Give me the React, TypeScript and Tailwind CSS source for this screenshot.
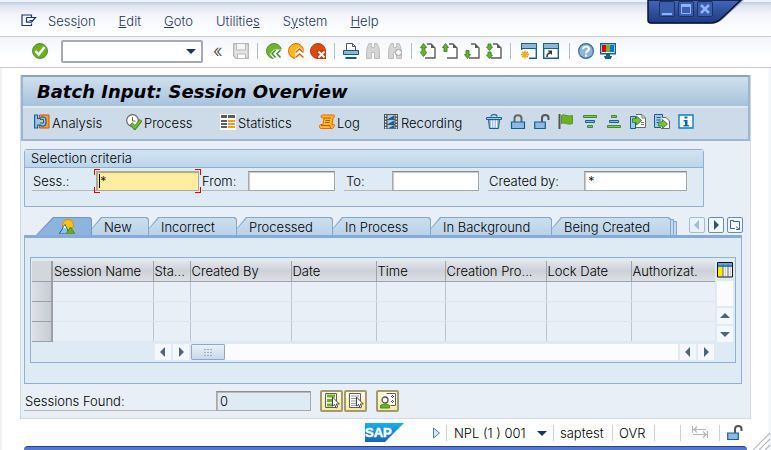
import React from 'react';
import type { ReactNode } from 'react';

function Icon({ children, size = 16 }: { children: ReactNode; size?: number }) {
  return (
    <svg width={size} height={size} viewBox="0 0 16 16" fill="none" className="block shrink-0" aria-hidden="true">
      {children}
    </svg>
  );
}

/* ---------- standard toolbar icons ---------- */
const OkIcon = () => (
  <Icon>
    <circle cx="8" cy="8" r="7.5" fill="#6fb01e" stroke="#4d8f35" />
    <path d="M3.5 8l3.2 3.6L12.5 4" stroke="#fff" strokeWidth="2.4" />
  </Icon>
);
const SaveIcon = () => (
  <Icon>
    <path d="M.7.7h14.6v14.6H3L.7 13z" fill="#e4e4e4" stroke="#b8b8b8" strokeWidth="1.4" />
    <path d="M3.5 1v6h9V1" fill="#f6f6f6" stroke="#b8b8b8" />
    <path d="M4.5 15v-4h8v4" fill="#fff" stroke="#b8b8b8" />
  </Icon>
);
const BackIcon = () => (
  <Icon>
    <circle cx="8" cy="8" r="7.5" fill="#72b32a" stroke="#4a9138" />
    <path d="M16 6.5H8L4 11l4 5h8z" fill="#fff" />
    <path d="M9.5 7L6 10.8l3.5 3.8M14.5 7L11 10.8l3.5 3.8" stroke="#3d8c3a" strokeWidth="1.5" />
  </Icon>
);
const ExitIcon = () => (
  <Icon>
    <circle cx="8" cy="8" r="7.5" fill="#fdb813" stroke="#e3640f" />
    <path d="M7 16V8l4-4 5 4v8z" fill="#fff" />
    <path d="M7.5 9.5L11.5 6l4 3.5M7.5 14.5l4-3.5 4 3.5" stroke="#e05a10" strokeWidth="1.5" />
  </Icon>
);
const CancelIcon = () => (
  <Icon>
    <circle cx="8" cy="8" r="7.5" fill="#d84b12" stroke="#b83a10" />
    <path d="M7 7h9v9H7z" fill="#c43c10" />
    <path d="M8.5 8.5l6 6M14.5 8.5l-6 6" stroke="#fff" strokeWidth="2" />
  </Icon>
);
const PrintIcon = () => (
  <Icon>
    <path d="M3.5 7V.5h6l3 3V7" fill="#fff" stroke="#555" />
    <path d="M9.5.5v3h3" stroke="#555" />
    <path d="M.5 7.5h15v4H.5z" fill="#8fb4da" stroke="#0b5c8f" />
    <path d="M2.5 15h11" stroke="#0b5c8f" strokeWidth="2" />
  </Icon>
);
const FindIcon = () => (
  <Icon>
    <path d="M2.5 3.5L4 .5h2.5v4h3v-4H12l1.5 3 1 5v7h-5v-6h-3v6h-5v-7z" fill="#d6d6d6" stroke="#bcbcbc" />
  </Icon>
);
const FindNextIcon = () => (
  <Icon>
    <path d="M2.5 3.5L4 .5h2.5v4h3v-4H12l1.5 3 1 5v7h-5v-6h-3v6h-5v-7z" fill="#d6d6d6" stroke="#bcbcbc" />
    <path d="M11.5 6v7M8 9.5h7" stroke="#b4b4b4" strokeWidth="4.5" />
    <path d="M11.5 7v5M9 9.5h5" stroke="#fff" strokeWidth="2" />
  </Icon>
);
const Page = () => (
  <>
    <path d="M5.5 1H11l4 4v10H5z" fill="#fff" />
    <path d="M7 1h4l4 4v10H5" stroke="#5c5c5c" strokeWidth="1.4" />
    <path d="M11 1v4h4z" fill="#5c5c5c" />
  </>
);
const FirstPageIcon = () => (
  <Icon>
    <Page />
    <path d="M3.5.5L.5 4.5H2v3L.5 9.5l3 4 3-4L5 7.5v-3h1.5z" fill="#6fb01e" stroke="#3d8c3a" />
  </Icon>
);
const PrevPageIcon = () => (
  <Icon>
    <Page />
    <path d="M3.5.5l-3 4H2v4h3v-4h1.5z" fill="#6fb01e" stroke="#3d8c3a" />
  </Icon>
);
const NextPageIcon = () => (
  <Icon>
    <Page />
    <path d="M3.5 15.5l-3-4H2v-4h3v4h1.5z" fill="#6fb01e" stroke="#3d8c3a" />
  </Icon>
);
const LastPageIcon = () => (
  <Icon>
    <Page />
    <path d="M3.5 7.5L.5 4H2V1h3v3h1.5zM3.5 15.5L.5 12H2V9h3v3h1.5z" fill="#6fb01e" stroke="#3d8c3a" />
  </Icon>
);
const NewModeIcon = () => (
  <Icon>
    <path d="M.7.7h14.6v14.6H.7z" fill="#fff" stroke="#12628f" strokeWidth="1.4" />
    <path d="M1 1h14v4H1z" fill="#8fb4d6" />
    <path d="M1 5.5h14" stroke="#12628f" />
    <path d="M0 7h8v9H0z" fill="#fff" />
    <path d="M4 7.5v8M0 11.5h8M1.2 8.7l5.6 5.6M6.8 8.7l-5.6 5.6" stroke="#ef8a10" strokeWidth="1.3" />
    <circle cx="4" cy="11.5" r="2.6" fill="#fdb312" />
  </Icon>
);
const ShortcutIcon = () => (
  <Icon>
    <path d="M.7.7h14.6v14.6H.7z" fill="#fff" stroke="#12628f" strokeWidth="1.4" />
    <path d="M1 1h14v4H1z" fill="#8fb4d6" />
    <path d="M1 5.5h14" stroke="#12628f" />
    <path d="M4 14c0-3 1-4 3.5-4" stroke="#333" strokeWidth="1.6" />
    <path d="M4.5 7.5H9V12z" fill="#333" />
  </Icon>
);
const HelpIcon = () => (
  <Icon>
    <circle cx="8" cy="8" r="7.4" fill="#8fb4d6" stroke="#2e6f9f" strokeWidth="1.2" />
    <path d="M5 6.2C5 2.8 11 2.8 11 6c0 2-3 2-3 4.2" stroke="#fff" strokeWidth="2" />
    <path d="M7 11.5h2v2H7z" fill="#fff" />
  </Icon>
);
const MonitorIcon = () => (
  <Icon>
    <path d="M.7.7h14.6v10.1H.7z" fill="#fff" stroke="#12628f" strokeWidth="1.4" />
    <path d="M2 2h4v7H2z" fill="#d00" />
    <path d="M6 2h4v7H6z" fill="#79b51c" />
    <path d="M10 2h4v7h-4z" fill="#0a78c8" />
    <path d="M6 11h4v2h2v1.5h-1V16H5v-1.5H4V13h2z" fill="#12628f" />
  </Icon>
);

/* ---------- application toolbar icons ---------- */
const AnalysisIcon = () => (
  <Icon>
    <path d="M5.5 1H15v13H5.5z" fill="#f9a51a" stroke="#d9480f" />
    <path d="M.6 1h3v3.5h2.5C7.5 2 12 2.5 12 6v2.5c0 4-4 4.5-6 2.5H3.600v3h-3z" fill="#9cc3e6" stroke="#0f64a0" strokeWidth="1.2" />
    <path d="M6 5.5h3.5V9H6" fill="#fbc45a" stroke="#0f64a0" />
  </Icon>
);
const ProcessIcon = () => (
  <Icon>
    <circle cx="6.5" cy="6.5" r="5.8" fill="#fff" stroke="#666" strokeWidth="1.2" />
    <path d="M6.5 3v4h3" stroke="#666" />
    <path d="M5 9.5L8.8 14 15 6" stroke="#3c8c28" strokeWidth="3.6" />
    <path d="M5.5 9.8l3.3 3.7 5.8-7" stroke="#7cc02c" strokeWidth="1.8" />
  </Icon>
);
const StatisticsIcon = () => (
  <Icon>
    <path d="M0 0h16v16H0z" fill="#fff" />
    <path d="M1 1h6v3H1zM8 1h7v3H8zM1 6h6v2H1zM1 9h6v2H1zM1 12h6v2H1z" fill="#5d5d5d" />
    <path d="M8 6h7v2H8zM8 9h7v2H8zM8 12h7v2H8z" fill="#f59a1a" />
  </Icon>
);
const LogIcon = () => (
  <Icon>
    <path d="M3.5 1h11c1.3 0 1.3 3-.5 3l-1 6.5h2c1 0 0 4-2 4H2c-2 0-2-4 0-4h2L5 4H3.5c-2 0-2-3 0-3z" fill="#fdbb1c" stroke="#e0680f" />
    <path d="M5 4h7M6.5 6.5H11M6 8.5h4.5M2 11.5h9c0 2 1 2.5 1 2.5" stroke="#cf4f10" />
  </Icon>
);
const RecordingIcon = () => (
  <Icon>
    <path d="M1 0h14v15H1z" fill="#4e5459" />
    <path d="M4.5 1h7v4h-7zM4.5 6h7v4h-7zM4.5 11h7v3.5h-7z" fill="#a9cbe9" />
    <path d="M5 5l6-3.5V5zM5 10l6-3.5V10zM5 14.5l6-3.5v3.5z" fill="#0f5f9c" />
    <path d="M2.7 1v14M13.3 1v14" stroke="#fff" strokeWidth="1.2" strokeDasharray="1.5 1.5" />
  </Icon>
);
const TrashIcon = () => (
  <Icon>
    <path d="M5 2.5C5 0 11 0 11 2.500" stroke="#12628f" strokeWidth="1.2" />
    <path d="M.5 3.5h15v2H.5z" fill="#a9c8e5" stroke="#12628f" />
    <path d="M2.5 5.5h11l-1 9h-9z" fill="#8fb4da" stroke="#12628f" />
    <path d="M5.5 6.5v7M8 6.5v7M10.5 6.5v7" stroke="#fff" strokeWidth="1.3" />
  </Icon>
);
const LockIcon = () => (
  <Icon>
    <path d="M4.5 8V4.5c0-4.5 7-4.5 7 0V8" stroke="#666" strokeWidth="2" />
    <path d="M1.5 8h13v6.5h-13z" fill="#8fb9e3" stroke="#12628f" strokeWidth="1.2" />
  </Icon>
);
const UnlockIcon = () => (
  <Icon>
    <path d="M8 8V4c0-4 6.500-4 6.500 0v2" stroke="#555" strokeWidth="2" />
    <path d="M.7 8h10.600v6.500H.7z" fill="#8fb9e3" stroke="#12628f" strokeWidth="1.2" />
  </Icon>
);
const FlagIcon = () => (
  <Icon>
    <path d="M1.5 0v15" stroke="#555" strokeWidth="2" />
    <path d="M3.5 1.5c3-2 5 1.5 11 0v8c-5 2-7-1.5-11 0z" fill="#6fb01e" stroke="#4d9a2e" />
  </Icon>
);
const Bars = ({ flip }: { flip?: boolean }) => (
  <Icon>
    <g transform={flip ? 'matrix(1 0 0 -1 0 15)' : undefined}>
      <path d="M1.5 1.5h13v2h-13z" fill="#8cc63e" stroke="#3d8c3a" />
      <path d="M3.5 6.5h9v2h-9z" fill="#8fb9e3" stroke="#12628f" />
      <path d="M5.5 11.5h5v2h-5z" fill="#8cc63e" stroke="#3d8c3a" />
    </g>
  </Icon>
);
const ImportIcon = () => (
  <Icon>
    <path d="M.5 2.5h5v12h-5z" fill="#a9c8e5" stroke="#12628f" />
    <path d="M6 .5h6L15.5 4v9.5H6" fill="#fff" stroke="#666" />
    <path d="M12 .5V4h3.5M11 8.5h3M11 10.5h3" stroke="#777" />
    <path d="M2.5 4.5h4V2l5 4.500-5 4.500V8.500h-4z" fill="#7fbe33" stroke="#3d8c3a" />
  </Icon>
);
const ExportIcon = () => (
  <Icon>
    <path d="M.5.5h8v13h-8z" fill="#a9c8e5" stroke="#12628f" />
    <path d="M2.5 3.5h4M2.5 6h4M2.5 8.5h3" stroke="#12628f" />
    <path d="M8 3.5h4L15.5 7v7.5H7" fill="#fff" stroke="#666" />
    <path d="M4.5 8h4V5.500l5 4.500-5 4.500V12h-4z" fill="#7fbe33" stroke="#3d8c3a" />
  </Icon>
);
const InfoIcon = () => (
  <Icon>
    <path d="M1 1h14v13H1z" fill="#fff" stroke="#0a80c0" strokeWidth="1.4" />
    <path d="M6.5 2.5h3v2h-3zM5.500 6h4v5H11v1.500H5.500V11H7V7.500H5.500z" fill="#0a6cae" />
  </Icon>
);

/* ---------- other drawings ---------- */
const OverviewIcon = () => (
  <Icon>
    <circle cx="9" cy="7" r="5.5" fill="#fdc312" stroke="#ef8210" />
    <path d="M0 16L6 6.5 10.5 16z" fill="#8fc0e0" stroke="#12628f" />
    <path d="M6 7l-2 3.5 2-.5 1.5 1.5z" fill="#fff" />
    <path d="M7 16l4.5-7L16 16z" fill="#6fb01e" stroke="#3d8c3a" />
  </Icon>
);
const LayoutIcon = () => (
  <svg width="16" height="16" viewBox="0 0 16 16" className="block" aria-hidden="true">
    <path d="M.5.5h15V15H.5z" fill="#f3f3f3" />
    <path d="M1 1h14v4H1z" fill="#2d7fd0" />
    <path d="M1 2h14" stroke="#9ccbf0" />
    <path d="M1 5h5v9.5H1z" fill="#ffe900" />
    <path d="M6 2v12.5M11 2v12.5" stroke="#666" />
    <path d="M8.5 5v9.5M13.5 5v9.5" stroke="#ccc" />
    <path d="M.5.5h15V15H.5z" fill="none" stroke="#111" />
  </svg>
);
const MenuIcon = () => (
  <svg width="16" height="14" viewBox="0 0 16 14" fill="none" stroke="#1d3461" strokeWidth="1.2" className="block" aria-hidden="true">
    <path d="M10.5 3V1H1v10.5h9.5v-2" />
    <path d="M5.5 3.5h9l-2.5 3H8.500M5.500 3.500v4.700h5l2-2" />
  </svg>
);
const SelectAllIcon = () => (
  <Icon>
    <path d="M1.5.5h11v14h-11z" fill="#fff" stroke="#5c5c5c" />
    <path d="M3 3h8M3 7.5h7M3 12h6" stroke="#6fb01e" strokeWidth="3" />
    <path d="M8.5 4v9l2.200-1.500 1.500 3.500 1.500-1-1.400-3h3z" fill="#fff" stroke="#444" />
  </Icon>
);
const DeselectIcon = () => (
  <Icon>
    <path d="M1.5.5h11v14h-11z" fill="#fff" stroke="#5c5c5c" />
    <path d="M3 3h8M3 5.5h7M3 8h5M3 10.5h5M3 12.5h5" stroke="#999" />
    <path d="M8.5 4v9l2.200-1.500 1.500 3.500 1.500-1-1.400-3h3z" fill="#fff" stroke="#444" />
  </Icon>
);
const UserIcon = () => (
  <Icon>
    <path d="M6.5.5h9v12h-5" fill="#fff" stroke="#5c5c5c" />
    <path d="M11 3.5h3M12.5 2v3M11 8.5h3M12.5 7v3" stroke="#444" strokeDasharray="1 1" />
    <circle cx="5" cy="7" r="3" fill="#fff" stroke="#555" strokeWidth="1.3" />
    <path d="M.5 15v-2.500l3-1.500h3l3 1.500V15z" fill="#6fb01e" stroke="#3d8c3a" />
  </Icon>
);
const Arrow = ({ dir, color = '#4c6478' }: { dir: 'l' | 'r' | 'u' | 'd'; color?: string }) => {
  const paths = { l: 'M7 0v10L2 5z', r: 'M3 0v10l5-5z', u: 'M0 7h10L5 2z', d: 'M0 3h10L5 8z' };
  return (
    <svg width="10" height="10" viewBox="0 0 10 10" className="block" aria-hidden="true">
      <path d={paths[dir]} fill={color} />
    </svg>
  );
};

/* ---------- building blocks ---------- */
const Sep = () => <span className="mx-[2px] h-4 w-px bg-[#a9bdd6]" />;

function ToolButton({ label, children }: { label: string; children: ReactNode }) {
  return (
    <button type="button" aria-label={label} className="shrink-0">
      {children}
    </button>
  );
}

function TextButton({ label, width, children }: { label: string; width: string; children: ReactNode }) {
  return (
    <button type="button" className={`flex shrink-0 items-center gap-[2px] text-left whitespace-nowrap ${width}`}>
      {children}
      <span className="pt-[2px]">{label}</span>
    </button>
  );
}

function ScrollButton({ dir, label }: { dir: 'l' | 'r' | 'u' | 'd'; label: string }) {
  return (
    <button type="button" aria-label={label} className="flex size-4 shrink-0 items-center justify-center bg-[#f4f8fc]">
      <Arrow dir={dir} />
    </button>
  );
}

function Field({ id, label, labelWidth, width, value = '', className = '' }: { id: string; label: string; labelWidth: string; width: string; value?: string; className?: string }) {
  return (
    <div className={`flex shrink-0 ${className}`}>
      <label htmlFor={id} className={`h-5 border-b border-[#b4b8bc] leading-5 whitespace-nowrap ${labelWidth}`}>{label}</label>
      <input id={id} defaultValue={value} className={`h-5 border border-[#a8a8a8] border-t-[#8c8c8c] bg-white px-[3px] shadow-[inset_1px_1px_1px_#c8c8c8] outline-none ${width}`} />
    </div>
  );
}

const tabs = [
  { label: 'New', width: 'w-[57px]' },
  { label: 'Incorrect', width: 'w-[88px]' },
  { label: 'Processed', width: 'w-[96px]' },
  { label: 'In Process', width: 'w-[98px]' },
  { label: 'In Background', width: 'w-[121px]' },
  { label: 'Being Created', width: 'w-[119px]' },
];

const columns = [
  { label: 'Session Name', width: 'w-[101px]' },
  { label: 'Sta...', width: 'w-[37px]' },
  { label: 'Created By', width: 'w-[101px]' },
  { label: 'Date', width: 'w-[85px]' },
  { label: 'Time', width: 'w-[69px]' },
  { label: 'Creation Pro...', width: 'w-[101px]' },
  { label: 'Lock Date', width: 'w-[85px]' },
  { label: 'Authorizat.', width: '' },
];

function Menu() {
  const item = 'shrink-0';
  return (
    <nav className="flex h-[37px] items-center gap-[23px] border-b border-[#c5cad6] bg-[linear-gradient(#eef2fb_0,#eef2fb_2px,#bfcde6_2px,#dfe4f1_6px,#f2f4f9_14px,#fbfcfd_26px,#fff)] pt-[6px] pl-[21px] text-[#1d3461]">
      <button type="button" aria-label="Menu" className="-mr-3"><MenuIcon /></button>
      <button type="button" className={item}>Sess<u>i</u>on</button>
      <button type="button" className={item}><u>E</u>dit</button>
      <button type="button" className={item}><u>G</u>oto</button>
      <button type="button" className={item}>Utilitie<u>s</u></button>
      <button type="button" className={item}>S<u>y</u>stem</button>
      <button type="button" className={item}><u>H</u>elp</button>
    </nav>
  );
}

function WindowControls() {
  const btn = 'flex size-4 items-center justify-center rounded-[2px] border border-[#1b3168] bg-[#3b5dab]';
  return (
    <div className="absolute top-0 right-[26px] h-[26px] w-[98px]">
      <svg width="98" height="26" viewBox="0 0 98 26" className="absolute inset-0" aria-hidden="true">
        <defs>
          <linearGradient id="cap" x1="0" y1="0" x2="0" y2="1">
            <stop offset="0" stopColor="#4467b8" />
            <stop offset="1" stopColor="#1f3a80" />
          </linearGradient>
        </defs>
        <path d="M2 0v21q0 3 3 3h59q7 0 12-5L97 0z" fill="#9ba3b5" />
        <path d="M1 0v20q0 3 3 3h59q7 0 12-5L94 0z" fill="url(#cap)" stroke="#0a1433" strokeWidth="1.5" />
      </svg>
      <div className="relative flex gap-[3px] pt-px pl-3">
        <button type="button" aria-label="Minimize" className={btn}>
          <svg width="12" height="12" viewBox="0 0 12 12" aria-hidden="true"><path d="M1 11h10" stroke="#8fb4ff" strokeWidth="2" /></svg>
        </button>
        <button type="button" aria-label="Maximize" className={btn}>
          <svg width="12" height="12" viewBox="0 0 12 12" fill="none" aria-hidden="true"><path d="M1.5 2h9v8.500h-9z" stroke="#8fb4ff" /><path d="M1 2.500h10" stroke="#8fb4ff" strokeWidth="3" /></svg>
        </button>
        <button type="button" aria-label="Close" className={btn}>
          <svg width="12" height="12" viewBox="0 0 12 12" aria-hidden="true"><path d="M2 2l8 8M10 2l-8 8" stroke="#8fb4ff" strokeWidth="2.5" /></svg>
        </button>
      </div>
    </div>
  );
}

function Toolbar() {
  return (
    <div className="flex h-[31px] items-center gap-[6px] border-b border-[#c5cad6] bg-[linear-gradient(#f3f5fa,#fff_70%)] pb-[2px] pl-8">
      <ToolButton label="Enter"><OkIcon /></ToolButton>
      <div className="mr-1 ml-[7px] flex h-[23px] w-[142px] items-center rounded-[2px] border-2 border-[#a6aab0] bg-white">
        <input aria-label="Command field" className="h-full w-0 flex-1 px-1 outline-none" />
        <button type="button" aria-label="Command history" className="pr-[5px]"><Arrow dir="d" color="#1d3461" /></button>
      </div>
      <button type="button" aria-label="Hide command field" className="w-[14px] text-left text-[18px] leading-4 text-[#444]">«</button>
      <ToolButton label="Save"><SaveIcon /></ToolButton>
      <Sep />
      <ToolButton label="Back"><BackIcon /></ToolButton>
      <ToolButton label="Exit"><ExitIcon /></ToolButton>
      <ToolButton label="Cancel"><CancelIcon /></ToolButton>
      <Sep />
      <ToolButton label="Print"><PrintIcon /></ToolButton>
      <ToolButton label="Find"><FindIcon /></ToolButton>
      <ToolButton label="Find next"><FindNextIcon /></ToolButton>
      <Sep />
      <ToolButton label="First page"><FirstPageIcon /></ToolButton>
      <ToolButton label="Previous page"><PrevPageIcon /></ToolButton>
      <ToolButton label="Next page"><NextPageIcon /></ToolButton>
      <ToolButton label="Last page"><LastPageIcon /></ToolButton>
      <Sep />
      <div className="mx-[2px] flex gap-[6px]">
        <ToolButton label="New session"><NewModeIcon /></ToolButton>
        <ToolButton label="Create shortcut"><ShortcutIcon /></ToolButton>
      </div>
      <Sep />
      <ToolButton label="Help"><HelpIcon /></ToolButton>
      <ToolButton label="Customize layout"><MonitorIcon /></ToolButton>
    </div>
  );
}

function TitlePanel() {
  return (
    <header className="border-2 border-[#9db5cd] border-t-[#8ba3bb] bg-[#cddbe8]">
      <h1 className="h-[31px] border-b-2 border-[#dfe9f2] bg-[linear-gradient(#d0e0ed,#a8c2dc)] pl-[14px] font-['DejaVu_Sans','Liberation_Sans',sans-serif] text-[18px] leading-[29px] font-bold whitespace-nowrap text-black italic">
        Batch Input: Session Overview
      </h1>
      <div className="flex h-[31px] items-center pb-1 pl-[11px]">
        <TextButton label="Analysis" width="w-[92px]"><AnalysisIcon /></TextButton>
        <TextButton label="Process" width="w-[94px]"><ProcessIcon /></TextButton>
        <TextButton label="Statistics" width="w-[99px]"><StatisticsIcon /></TextButton>
        <TextButton label="Log" width="w-[64px]"><LogIcon /></TextButton>
        <TextButton label="Recording" width="w-[103px]"><RecordingIcon /></TextButton>
        <div className="flex gap-2">
          <ToolButton label="Delete"><TrashIcon /></ToolButton>
          <ToolButton label="Lock"><LockIcon /></ToolButton>
          <ToolButton label="Unlock"><UnlockIcon /></ToolButton>
          <ToolButton label="Release"><FlagIcon /></ToolButton>
          <ToolButton label="Sort descending"><Bars /></ToolButton>
          <ToolButton label="Sort ascending"><Bars flip /></ToolButton>
          <ToolButton label="Import"><ImportIcon /></ToolButton>
          <ToolButton label="Export"><ExportIcon /></ToolButton>
          <ToolButton label="Information"><InfoIcon /></ToolButton>
        </div>
      </div>
    </header>
  );
}

function Criteria() {
  return (
    <section className="mt-2 mr-[46px] ml-[3px] rounded-t-[3px] border border-[#8fb0d3] bg-[#deebf5]">
      <h2 className="h-[18px] border-b border-[#8fb0d3] bg-[linear-gradient(#d3e2f1,#bdd5ea)] pl-[6px] leading-[17px]">Selection criteria</h2>
      <div className="flex h-[38px] items-start pt-[3px] pl-[7px]">
        <label htmlFor="sess" className="h-5 w-[64px] border-b border-[#b4b8bc] pl-px leading-5">Sess.:</label>
        <div className="relative flex">
          <input id="sess" defaultValue="*" className="h-5 w-[103px] border border-[#a8a8a8] bg-[#ffeda0] px-[3px] shadow-[inset_1px_1px_1px_#b8a860] outline-none" />
          <span className="absolute top-[3px] left-[3px] h-[14px] w-px bg-black" />
          <span className="absolute -top-[2px] -left-[2px] size-[6px] border-t border-l border-[#e00000]" />
          <span className="absolute -top-[2px] -right-[2px] size-[6px] border-t border-r border-[#e00000]" />
          <span className="absolute -bottom-[2px] -left-[2px] size-[6px] border-b border-l border-[#e00000]" />
          <span className="absolute -right-[2px] -bottom-[2px] size-[6px] border-r border-b border-[#e00000]" />
        </div>
        <Field id="from" label="From:" labelWidth="w-[46px]" width="w-[87px]" className="ml-[3px]" />
        <Field id="to" label="To:" labelWidth="w-[48px] pl-[2px]" width="w-[87px]" className="ml-[9px]" />
        <Field id="createdby" label="Created by:" labelWidth="w-[96px] pl-px" width="w-[103px]" value="*" className="ml-[9px]" />
      </div>
    </section>
  );
}

function TabStrip() {
  const nav = 'flex size-4 items-center justify-center rounded-[2px] border';
  return (
    <div className="mr-[7px] ml-[3px] flex h-[18px] pl-3" role="tablist">
      <button type="button" role="tab" aria-selected="true" aria-label="Overview" className="relative h-[18px] w-[56px] shrink-0 pl-[23px]">
        <span className="absolute inset-0 bg-[#6f97c6] [clip-path:polygon(0_100%,17px_0,54px_0,100%_2px,100%_100%)]" />
        <span className="absolute inset-x-px top-px bottom-0 bg-[#8eb3de] [clip-path:polygon(0_100%,17px_0,52px_0,100%_2px,100%_100%)]" />
        <span className="relative block"><OverviewIcon /></span>
      </button>
      {tabs.map((t) => (
        <button key={t.label} type="button" role="tab" aria-selected="false" className={`relative h-[18px] shrink-0 pl-3 text-left leading-[20px] whitespace-nowrap ${t.width}`}>
          <span className="absolute inset-0 bg-[#84a7cd] [clip-path:polygon(0_11px,9px_0,calc(100%-2px)_0,100%_2px,100%_100%,0_100%)]" />
          <span className="absolute top-px right-px bottom-0 left-0 bg-[linear-gradient(#cbdeee,#bad2e8)] [clip-path:polygon(0_11px,10px_0,calc(100%-2px)_0,100%_2px,100%_100%,0_100%)]" />
          <span className="relative">{t.label}</span>
        </button>
      ))}
      <span className="mt-[2px] w-[3px] border-t border-r border-[#84a7cd] bg-[#c5d9eb]" />
      <span className="mt-1 w-[3px] border-t border-r border-[#84a7cd] bg-[#c5d9eb]" />
      <div className="ml-auto flex gap-[3px]">
        <button type="button" aria-label="Scroll tabs left" className={`${nav} border-[#9fbcdc] bg-[#e9f1f9]`}><Arrow dir="l" color="#9fbcdc" /></button>
        <button type="button" aria-label="Scroll tabs right" className={`${nav} border-[#5f8fc0] bg-[#f4f8fc]`}><Arrow dir="r" color="#2c567f" /></button>
        <button type="button" aria-label="Tab list" className={`${nav} border-[#5f8fc0] bg-[#f4f8fc]`}>
          <svg width="12" height="12" viewBox="0 0 12 12" fill="none" stroke="#3c6890" aria-hidden="true">
            <path d="M6 9.5H1.5v-8h3V3M4.500 2.500h6v5M1.500 4.500h0M7 7.500l3.500 3M10.500 7.500v3H7" />
          </svg>
        </button>
      </div>
    </div>
  );
}

function SessionTable() {
  return (
    <div className="mx-[5px] mt-[19px] border border-[#8fb0d3] pt-[3px] pr-px pb-[2px] pl-px">
      <div className="flex">
        <table className="min-w-0 flex-1 table-fixed border-collapse">
          <thead>
            <tr className="h-[20px] bg-[linear-gradient(#e2e5e9,#cdd0d6_50%,#dcdfe3)]">
              <th className="w-5 border-r-2 border-b border-[#9ba0a8] bg-[#d3d7dc] p-0" />
              {columns.map((c) => (
                <th key={c.label} scope="col" className={`border-r border-b border-[#9ba3ae] p-0 pl-px text-left leading-[18px] font-light whitespace-nowrap last:border-r-0 ${c.width}`}>
                  {c.label}
                </th>
              ))}
            </tr>
          </thead>
          <tbody>
            {['r1', 'r2', 'r3'].map((r) => (
              <tr key={r} className="h-[20px]">
                <td className="border-r-2 border-b border-[#9ba0a8] bg-[linear-gradient(90deg,#dde1e6,#c7ccd3)] p-0" />
                {columns.map((c) => (
                  <td key={c.label} className="border-r border-b border-r-[#bac4d3] border-b-[#dbe6f2] bg-[#e8eff7] p-0 last:border-r-0" />
                ))}
              </tr>
            ))}
          </tbody>
        </table>
        <div className="flex w-[19px] shrink-0 flex-col items-center gap-[2px]">
          <button type="button" aria-label="Choose layout" className="mb-px pt-px"><LayoutIcon /></button>
          <div className="w-4 flex-1 bg-[#fbfcfd]" />
          <ScrollButton dir="u" label="Scroll up" />
          <ScrollButton dir="d" label="Scroll down" />
        </div>
      </div>
      <div className="mt-[2px] flex gap-[2px] pr-[20px] pl-[123px]">
        <ScrollButton dir="l" label="Scroll left" />
        <ScrollButton dir="r" label="Scroll right" />
        <div className="flex-1 bg-[#fbfcfd]">
          <div className="flex h-4 w-[34px] items-center justify-center rounded-[1px] border border-[#8fa9c2] bg-[linear-gradient(#e9f1f8,#c9d9e8)]">
            <svg width="9" height="8" viewBox="0 0 9 8" aria-hidden="true">
              <path d="M0 1.5h9M0 4.5h9M0 7.5h9" stroke="#9db0c4" strokeDasharray="2 1" />
            </svg>
          </div>
        </div>
        <ScrollButton dir="l" label="Column left" />
        <ScrollButton dir="r" label="Column right" />
      </div>
    </div>
  );
}

function StatusBar() {
  const cell = 'flex h-4 items-center border-l border-[#d0d0d0]';
  return (
    <footer className="flex h-[27px] items-center pt-px pr-[28px] text-black">
      <svg width="39" height="19" viewBox="0 0 39 19" className="mr-[28px] ml-auto" role="img" aria-label="SAP">
        <defs>
          <linearGradient id="sap" x1="0" y1="0" x2="0" y2="1">
            <stop offset="0" stopColor="#12b4ec" />
            <stop offset="1" stopColor="#1b62bb" />
          </linearGradient>
        </defs>
        <path d="M0 0h39L20 19H0z" fill="url(#sap)" />
        <text x="0" y="14" fill="#fff" stroke="#fff" strokeWidth="0.5" fontFamily="Liberation Sans, sans-serif" fontWeight="bold" fontSize="13">SAP</text>
      </svg>
      <button type="button" aria-label="Expand status" className="mr-[5px]">
        <svg width="9" height="12" viewBox="0 0 9 12" className="block" aria-hidden="true"><path d="M1.5 1l6 5-6 5z" fill="#dbeafa" stroke="#4c7cb0" /></svg>
      </button>
      <div className={`${cell} w-[107px] justify-between pr-[6px] pl-[7px]`}>
        <span className="whitespace-nowrap">NPL (1 ) 001</span>
        <button type="button" aria-label="System details"><Arrow dir="d" color="#1d3461" /></button>
      </div>
      <div className={`${cell} w-[59px] pl-[6px]`}>saptest</div>
      <div className={`${cell} w-[42px] pl-[6px]`}>OVR</div>
      <div className={`${cell} w-[26px]`} />
      <div className={`${cell} w-[39px] pl-[11px]`}>
        <Icon>
          <path d="M.5 1v7M15.5 6v7M1 4.5h13M1 9.5h14M5 1.5l-3 3 3 3M11 6.5l3 3-3 3" stroke="#b5b5b5" strokeWidth="1.2" />
        </Icon>
      </div>
      <div className={`${cell} pl-[7px]`}><UnlockIcon /></div>
    </footer>
  );
}

export default function App() {
  const footButton = 'flex h-[22px] w-[23px] items-center justify-center rounded-[2px] border-2 border-[#a39a72] bg-[linear-gradient(#fffbe0,#fbe9a0)]';
  return (
    <div className="relative flex min-h-screen flex-col overflow-hidden bg-[linear-gradient(90deg,#ececec,#fff_3px,#fff_calc(100%-4px),#eef1f6)] font-['Inter','Liberation_Sans',sans-serif] text-[13px] leading-4 font-light text-black">
      <Menu />
      <WindowControls />
      <Toolbar />
      <main className="mx-5 mt-[7px] border border-t-0 border-[#d0d9e8] bg-[#e9eff7]">
        <TitlePanel />
        <Criteria />
        <div className="mt-[10px]">
          <TabStrip />
          <div className="mr-2 ml-[3px] border border-t-[3px] border-[#8fb0d3] border-t-[#86abd8] bg-[#deebf5] pb-[20px]">
            <SessionTable />
          </div>
        </div>
        <div className="flex h-[34px] items-center pl-[3px]">
          <label htmlFor="found" className="h-5 w-[192px] border-b border-[#b4b8bc] pl-px leading-5">Sessions Found:</label>
          <input id="found" readOnly defaultValue="0" className="h-5 w-[95px] border border-[#a8a8a8] border-t-[#8c8c8c] bg-[#deebf5] px-[3px] shadow-[inset_1px_1px_0_#b8b8b8] outline-none" />
          <div className="ml-[9px] flex gap-px">
            <button type="button" aria-label="Select all" className={footButton}><SelectAllIcon /></button>
            <button type="button" aria-label="Deselect all" className={footButton}><DeselectIcon /></button>
            <button type="button" aria-label="User details" className={`ml-2 ${footButton}`}><UserIcon /></button>
          </div>
        </div>
      </main>
      <StatusBar />
      <div className="mx-6 mt-auto h-[4px] rounded-t-[12px] border-t border-[#24429a] bg-[#5578cc]" />
      <svg width="18" height="18" viewBox="0 0 18 18" className="absolute right-0 bottom-0" aria-hidden="true">
        <path d="M0 18L17 1M6 18L17 7M12 18l5-5" stroke="#b4b8c0" strokeWidth="1.2" />
      </svg>
    </div>
  );
}
